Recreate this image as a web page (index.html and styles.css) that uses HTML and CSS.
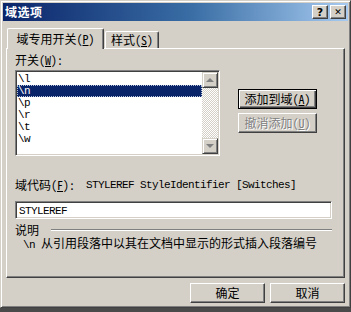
FILE: index.html
```html
<!DOCTYPE html>
<html lang="zh-CN">
<head>
    <meta charset="UTF-8">
    <title>域选项</title>
    <link rel="stylesheet" href="styles.css">
</head>
<body>
    <div class="window">
        <div class="titlebar">
            <span class="title">域选项</span>
            <div class="title-buttons">
                <div class="title-btn">?</div>
                <div class="title-btn close">✕</div>
            </div>
        </div>

        <div class="content">
            <div class="tabs">
                <div class="tab active">域专用开关(<u>P</u>)</div>
                <div class="tab">样式(<u>S</u>)</div>
            </div>

            <div class="panel">
                <div class="label">开关(<u>W</u>):</div>

                <div class="list-row">
                    <div class="listbox">
                        <div class="list-items">
                            <div class="item">\l</div>
                            <div class="item selected">\n</div>
                            <div class="item">\p</div>
                            <div class="item">\r</div>
                            <div class="item">\t</div>
                            <div class="item">\w</div>
                        </div>
                        <div class="scrollbar">
                            <div class="arrow"><span class="tri up"></span></div>
                            <div class="track"></div>
                            <div class="arrow"><span class="tri down"></span></div>
                        </div>
                    </div>

                    <div class="side-buttons">
                        <div class="btn default">添加到域(<u>A</u>)</div>
                        <div class="btn disabled">撤消添加(<u>U</u>)</div>
                    </div>
                </div>

                <div class="code-row">
                    <span class="code-label">域代码(<u>F</u>):</span>
                    <span class="code-value">STYLEREF StyleIdentifier [Switches]</span>
                </div>

                <div class="field">STYLEREF</div>

                <div class="group-head">
                    <span>说明</span>
                    <div class="etched"></div>
                </div>
                <div class="desc"><span class="mono">\n</span> 从引用段落中以其在文档中显示的形式插入段落编号</div>
            </div>

            <div class="footer">
                <div class="btn">确定</div>
                <div class="btn">取消</div>
            </div>
        </div>
    </div>
</body>
</html>
```

FILE: styles.css
```css
* {
    margin: 0;
    padding: 0;
    box-sizing: border-box;
}

body {
    background-color: #4a4a4a;
    width: 351px;
    height: 312px;
    overflow: hidden;
    font-family: "Noto Sans Mono CJK SC", "Noto Sans CJK SC", sans-serif;
    font-size: 12px;
    line-height: 14px;
    color: #000;
}

u {
    text-decoration: underline;
    text-underline-offset: 1px;
}

.window {
    width: 351px;
    height: 308px;
    background-color: #d4d0c8;
    border: 1px solid;
    border-color: #d4d0c8 #404040 #404040 #d4d0c8;
    box-shadow: inset 1px 1px #fff, inset -1px -1px #808080;
    padding: 2px;
}

/* title bar */
.titlebar {
    height: 18px;
    background: linear-gradient(to right, #0a246a 0%, #3a6ea5 55%, #a6caf0 100%);
    display: flex;
    align-items: center;
    justify-content: space-between;
    padding: 0 2px 0 2px;
}

.title {
    color: #fff;
    font-family: "Noto Sans CJK SC", sans-serif;
    font-weight: bold;
    font-size: 12px;
    letter-spacing: 0.5px;
}

.title-buttons {
    display: flex;
    gap: 2px;
}

.title-btn {
    width: 16px;
    height: 14px;
    background-color: #d4d0c8;
    border: 1px solid;
    border-color: #fff #404040 #404040 #fff;
    box-shadow: inset -1px -1px #808080;
    font-family: "DejaVu Sans", sans-serif;
    font-weight: bold;
    font-size: 11px;
    line-height: 11px;
    display: flex;
    align-items: center;
    justify-content: center;
}

.title-btn.close {
    font-size: 9px;
}

/* body of the dialog */
.content {
    padding: 7px 3px 0 3px;
}

.tabs {
    display: flex;
    align-items: flex-end;
    height: 21px;
    margin-bottom: -1px;
}

.tab {
    height: 17px;
    padding: 0 5px;
    margin-left: 1px;
    border: 1px solid;
    border-bottom: none;
    border-color: #fff #404040 #404040 #fff;
    box-shadow: inset -1px 0 #808080;
    border-radius: 2px 2px 0 0;
    background-color: #d4d0c8;
    display: flex;
    align-items: center;
    margin-bottom: 1px;
}

.tab.active {
    width: 97px;
    height: 21px;
    margin-bottom: 0;
    justify-content: center;
    position: relative;
    z-index: 1;
}

.panel {
    height: 230px;
    border: 1px solid;
    border-color: #fff #404040 #404040 #fff;
    box-shadow: inset -1px -1px #808080;
    padding: 4px 8px 0 8px;
}

.label {
    height: 14px;
}

.list-row {
    display: flex;
    margin-top: 3px;
}

.listbox {
    width: 205px;
    height: 86px;
    background-color: #fff;
    border: 1px solid;
    border-color: #808080 #fff #fff #808080;
    box-shadow: inset 1px 1px #404040, inset -1px -1px #d4d0c8;
    padding: 1px;
    display: flex;
}

.list-items {
    flex: 1;
    padding-top: 1px;
}

.item {
    height: 12px;
    line-height: 12px;
    padding-left: 1px;
    font-family: "Liberation Mono", monospace;
    font-size: 11px;
    letter-spacing: -0.6px;
}

.item.selected {
    background-color: #0a246a;
    color: #fff;
    outline: 1px dotted #b8c4dc;
    outline-offset: -1px;
}

.scrollbar {
    width: 16px;
    display: flex;
    flex-direction: column;
}

.arrow {
    height: 16px;
    background-color: #d4d0c8;
    border: 1px solid;
    border-color: #d4d0c8 #404040 #404040 #d4d0c8;
    box-shadow: inset 1px 1px #fff, inset -1px -1px #808080;
    display: flex;
    align-items: center;
    justify-content: center;
}

.track {
    flex: 1;
    background-color: #fff;
    background-image: repeating-conic-gradient(#d4d0c8 0 25%, #fff 0 50%);
    background-size: 2px 2px;
}

.tri {
    width: 0;
    height: 0;
    border-left: 4px solid transparent;
    border-right: 4px solid transparent;
}

.tri.up {
    border-bottom: 4px solid #808080;
}

.tri.down {
    border-top: 4px solid #808080;
}

.side-buttons {
    display: flex;
    flex-direction: column;
    gap: 4px;
    margin-left: 18px;
    padding-top: 19px;
}

.btn {
    width: 79px;
    height: 20px;
    background-color: #d4d0c8;
    border: 1px solid;
    border-color: #fff #404040 #404040 #fff;
    box-shadow: inset -1px -1px #808080;
    display: flex;
    align-items: center;
    justify-content: center;
    line-height: 14px;
}

.btn.default {
    border-color: #000;
    box-shadow: inset 1px 1px #fff, inset -1px -1px #404040, inset -2px -2px #808080;
}

.btn.disabled {
    color: #808080;
    text-shadow: 1px 1px #fff;
}

.code-row {
    margin-top: 22px;
    height: 14px;
    display: flex;
    align-items: center;
}

.code-label {
    width: 71px;
}

.code-value,
.mono {
    font-family: "Liberation Mono", monospace;
    font-size: 11px;
    letter-spacing: -0.6px;
}

.field {
    margin-top: 9px;
    width: 317px;
    height: 18px;
    background-color: #fff;
    border: 1px solid;
    border-color: #808080 #fff #fff #808080;
    box-shadow: inset 1px 1px #404040, inset -1px -1px #d4d0c8;
    padding: 2px 3px 0;
    font-family: "Liberation Mono", monospace;
    font-size: 11px;
    letter-spacing: -0.6px;
}

.group-head {
    margin-top: 4px;
    height: 14px;
    display: flex;
    align-items: center;
    width: 317px;
}

.etched {
    flex: 1;
    margin-left: 12px;
    height: 2px;
    border-top: 1px solid #808080;
    border-bottom: 1px solid #fff;
}

.desc {
    margin-top: -1px;
    padding-left: 8px;
    height: 14px;
}

.footer {
    display: flex;
    justify-content: flex-end;
    gap: 5px;
    margin-top: 5px;
}

.footer .btn {
    width: 75px;
}
```
